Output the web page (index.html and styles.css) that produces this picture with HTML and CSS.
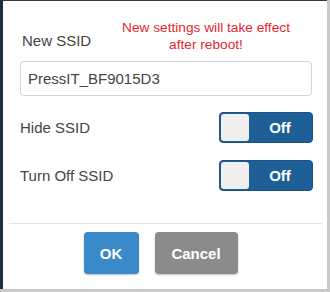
FILE: index.html
```html
<!DOCTYPE html>
<html>
<head>
    <meta charset="UTF-8" />
    <title>SSID Settings</title>
    <link rel="stylesheet" href="styles.css">
</head>

<body>
<div class="dialog">
    <div class="dialog-content">
        <div class="ssid-head">
            <label class="field-label" for="ssid">New SSID</label>
            <div class="notice">New settings will take effect<br>after reboot!</div>
        </div>
        <input type="text" class="text-input" id="ssid" value="PressIT_BF9015D3">

        <div class="option-row">
            <span class="field-label">Hide SSID</span>
            <div class="toggle">
                <span class="toggle-knob"></span>
                <span class="toggle-text">Off</span>
            </div>
        </div>
        <div class="option-row">
            <span class="field-label">Turn Off SSID</span>
            <div class="toggle">
                <span class="toggle-knob"></span>
                <span class="toggle-text">Off</span>
            </div>
        </div>
    </div>

    <div class="dialog-footer">
        <button class="btn btn-ok">OK</button>
        <button class="btn btn-cancel">Cancel</button>
    </div>
</div>
</body>
</html>
```

FILE: styles.css
```css
* {
    margin: 0;
    padding: 0;
    box-sizing: border-box;
    font-family: 'Liberation Sans', Arial, sans-serif;
}

html, body {
    width: 330px;
    height: 292px;
    overflow: hidden;
}

body {
    background-color: #c9c9c9;
    color: #444444;
}

.dialog {
    height: 289px;
    width: 327px;
    background-color: #ffffff;
    border-left: 3px solid #1d3041;
    border-top: 1px solid #2a3a48;
    display: flex;
    flex-direction: column;
}

.dialog-content {
    padding: 17px 15px 0 17px;
}

.ssid-head {
    display: flex;
    align-items: flex-start;
}

.field-label {
    font-size: 15px;
    color: #444444;
}

.ssid-head .field-label {
    margin-top: 14px;
    margin-left: 2px;
    width: 96px;
}

.notice {
    color: #e8262f;
    font-size: 13.7px;
    line-height: 17px;
    text-align: center;
    width: 176px;
    margin-top: 1px;
}

.text-input {
    display: block;
    width: 292px;
    height: 35px;
    margin-top: 8px;
    border: 1px solid #d4d4d4;
    border-radius: 4px;
    padding: 0 7px;
    font-size: 15px;
    color: #444444;
    outline: none;
}

.option-row {
    display: flex;
    justify-content: space-between;
    align-items: center;
    width: 293px;
    margin-top: 16px;
}

.option-row + .option-row {
    margin-top: 17px;
}

.toggle {
    width: 94px;
    height: 31px;
    background-color: #1f5f98;
    border: 1px solid #1a5288;
    border-radius: 4px;
    display: flex;
    align-items: center;
    padding: 1px;
}

.toggle-knob {
    width: 28px;
    height: 27px;
    background-color: #efefef;
    border-radius: 3px;
}

.toggle-text {
    flex: 1;
    text-align: center;
    color: #ffffff;
    font-weight: bold;
    font-size: 15px;
}

.dialog-footer {
    margin: 32px 5px 0 6px;
    border-top: 1px solid #e3e3e3;
    padding-top: 8px;
    display: flex;
    justify-content: center;
    gap: 16px;
    padding-right: 10px;
}

.btn {
    height: 42px;
    border: none;
    border-radius: 4px;
    color: #ffffff;
    font-weight: bold;
    font-size: 15px;
    box-shadow: 0 1px 2px rgba(0, 0, 0, 0.25);
    cursor: pointer;
}

.btn-ok {
    width: 55px;
    background-color: #3a89c8;
}

.btn-cancel {
    width: 83px;
    background-color: #8b8b8b;
}
```
